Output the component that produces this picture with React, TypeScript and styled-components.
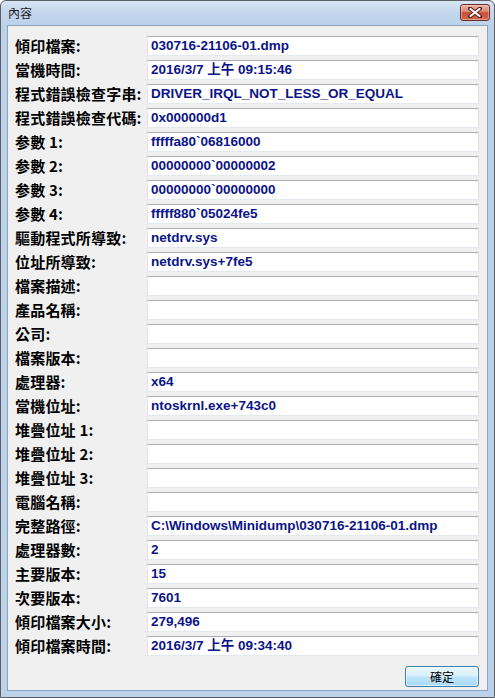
import React from "react";
import styled, { createGlobalStyle } from "styled-components";

const Global = createGlobalStyle`
  html, body { margin: 0; padding: 0; background: #ffffff; }
  body { font-family: "Noto Sans CJK TC", "Liberation Sans", sans-serif; }
`;

const Window = styled.div`
  box-sizing: border-box;
  width: 495px;
  height: 698px;
  display: flex;
  flex-direction: column;
  border: 1px solid #5a5f66;
  border-radius: 6px 6px 0 0;
  background: linear-gradient(180deg, #d7e4f3 0px, #c3d6ec 12px, #bcd2eb 24px, #bcd2eb 100%);
  overflow: hidden;
`;

const TitleBar = styled.div`
  height: 24px;
  flex: none;
  display: flex;
  align-items: flex-start;
  justify-content: space-between;
  padding: 3px 4px 0 7px;
  box-sizing: border-box;
`;

const Title = styled.span`
  font-family: "Noto Sans CJK TC", sans-serif;
  font-size: 12px;
  line-height: 18px;
  color: #1a1a1a;
`;

const CloseButton = styled.div`
  width: 30px;
  height: 17px;
  box-sizing: border-box;
  border: 1px solid #6a2b22;
  border-radius: 3px;
  background: linear-gradient(180deg, #eab2a4 0%, #d98a76 42%, #c64f37 52%, #d06a52 100%);
  display: flex;
  align-items: center;
  justify-content: center;
  box-shadow: inset 0 0 0 1px rgba(255, 220, 210, 0.45);
`;

const Client = styled.div`
  flex: 1;
  margin: 0 6px 6px 6px;
  border: 1px solid #8da2bd;
  background: #f0f0f0;
  display: flex;
  flex-direction: column;
  padding: 10px 8px 0 7px;
  min-height: 0;
`;

const Fields = styled.div`
  display: grid;
  grid-template-columns: 132px 1fr;
  grid-auto-rows: 20px;
  row-gap: 4px;
`;

const Label = styled.div`
  font-family: "Noto Sans CJK TC", sans-serif;
  font-weight: 700;
  font-size: 15px;
  line-height: 20px;
  color: #000000;
  white-space: nowrap;
  letter-spacing: 0.2px;
`;

const ValueBox = styled.div`
  box-sizing: border-box;
  height: 20px;
  background: #ffffff;
  border-style: solid;
  border-width: 1px;
  border-color: #abadb3 #dbdfe6 #e3e9ef #e2e3ea;
  padding: 0 3px;
  font-family: "Liberation Sans", "Noto Sans CJK TC", sans-serif;
  font-weight: 700;
  font-size: 13.5px;
  line-height: 18px;
  color: #0c1488;
  white-space: nowrap;
  overflow: hidden;
`;

const Footer = styled.div`
  display: flex;
  justify-content: flex-end;
  margin-top: 10px;
`;

const OkButton = styled.button`
  width: 74px;
  height: 21px;
  box-sizing: border-box;
  border: 1px solid #3c7fb1;
  border-radius: 3px;
  background: linear-gradient(180deg, #eaf6fd 0%, #d9f0fc 48%, #bee6fd 52%, #a7d9f5 100%);
  box-shadow: inset 0 0 0 1px rgba(255, 255, 255, 0.6);
  font-family: "Noto Sans CJK TC", sans-serif;
  font-size: 12px;
  line-height: 17px;
  color: #000000;
  padding: 0;
  cursor: default;
`;

const rows: [string, string][] = [
  ["傾印檔案:", "030716-21106-01.dmp"],
  ["當機時間:", "2016/3/7 上午 09:15:46"],
  ["程式錯誤檢查字串:", "DRIVER_IRQL_NOT_LESS_OR_EQUAL"],
  ["程式錯誤檢查代碼:", "0x000000d1"],
  ["参數 1:", "fffffa80`06816000"],
  ["参數 2:", "00000000`00000002"],
  ["参數 3:", "00000000`00000000"],
  ["参數 4:", "fffff880`05024fe5"],
  ["驅動程式所導致:", "netdrv.sys"],
  ["位址所導致:", "netdrv.sys+7fe5"],
  ["檔案描述:", ""],
  ["產品名稱:", ""],
  ["公司:", ""],
  ["檔案版本:", ""],
  ["處理器:", "x64"],
  ["當機位址:", "ntoskrnl.exe+743c0"],
  ["堆疊位址 1:", ""],
  ["堆疊位址 2:", ""],
  ["堆疊位址 3:", ""],
  ["電腦名稱:", ""],
  ["完整路徑:", "C:\\Windows\\Minidump\\030716-21106-01.dmp"],
  ["處理器數:", "2"],
  ["主要版本:", "15"],
  ["次要版本:", "7601"],
  ["傾印檔案大小:", "279,496"],
  ["傾印檔案時間:", "2016/3/7 上午 09:34:40"],
];

const CloseIcon = () => (
  <svg width="14" height="11" viewBox="0 0 14 11">
    <path
      d="M2 1.5 L12 9.5 M12 1.5 L2 9.5"
      stroke="#5a1e16"
      strokeWidth="4"
      strokeLinecap="round"
      fill="none"
    />
    <path
      d="M2.5 2 L11.5 9 M11.5 2 L2.5 9"
      stroke="#ffffff"
      strokeWidth="2.2"
      strokeLinecap="round"
      fill="none"
    />
  </svg>
);

export default function App() {
  return (
    <>
      <Global />
      <Window>
        <TitleBar>
          <Title>內容</Title>
          <CloseButton>
            <CloseIcon />
          </CloseButton>
        </TitleBar>
        <Client>
          <Fields>
            {rows.map(([label, value]) => (
              <React.Fragment key={label}>
                <Label>{label}</Label>
                <ValueBox>{value}</ValueBox>
              </React.Fragment>
            ))}
          </Fields>
          <Footer>
            <OkButton>確定</OkButton>
          </Footer>
        </Client>
      </Window>
    </>
  );
}
